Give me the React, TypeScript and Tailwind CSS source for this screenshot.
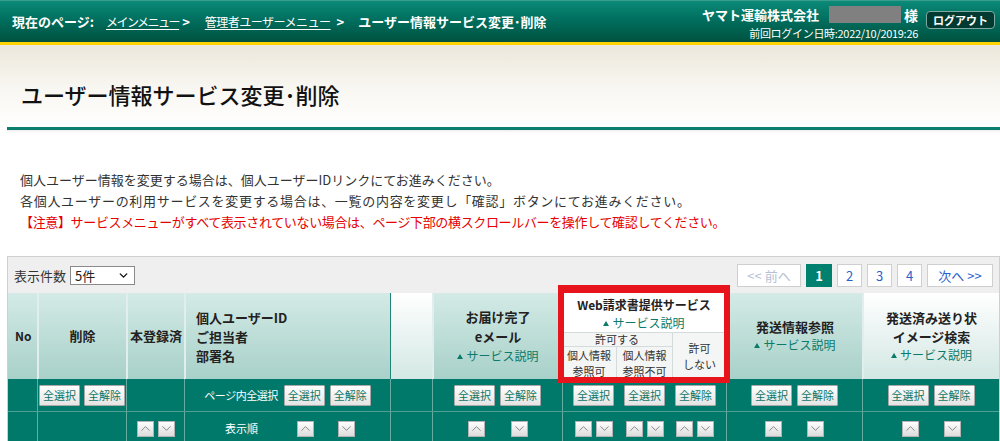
import React from "react";
import { ChevronUp, ChevronDown } from "lucide-react";

function Btn({ label }: { label: string }) {
  return (
    <div className="w-[41px] h-[21px] flex items-center justify-center border border-[#a9a9a9] bg-gradient-to-b from-white to-[#e4e4e4] text-[11px] leading-none text-[#0b7565] rounded-[1px]">
      {label}
    </div>
  );
}

function Arrow({ up }: { up?: boolean }) {
  return (
    <div className="w-[17px] h-[16px] flex items-center justify-center border border-[#b4b4b4] bg-gradient-to-b from-white to-[#dcdcdc]">
      {up ? (
        <ChevronUp size={15} strokeWidth={1.4} color="#7a7a7a" />
      ) : (
        <ChevronDown size={15} strokeWidth={1.4} color="#7a7a7a" />
      )}
    </div>
  );
}

function Pair() {
  return (
    <div className="flex gap-[4px]">
      <Arrow up />
      <Arrow />
    </div>
  );
}

function Svc() {
  return (
    <div className="flex items-center text-[12px] leading-[18px] text-[#0a7a69] font-normal">
      <svg width="6" height="5" viewBox="0 0 6 5" className="mr-[3px]">
        <polygon points="3,0 6,5 0,5" fill="#0a7a69" />
      </svg>
      サービス説明
    </div>
  );
}

const hdr =
  "bg-gradient-to-b from-[#d3eae6] to-[#a8d1c9] border-l-2 border-[#e2eeec]";
const body = "border-l border-[#66aca1]";

export default function App() {
  return (
    <div className="font-['Noto_Sans_CJK_JP','Noto_Sans',sans-serif] w-[1000px] h-[441px] overflow-hidden bg-white text-[#222]">
      {/* Top header */}
      <div className="h-[42px] bg-gradient-to-b from-[#0c8a78] via-[#006c5c] to-[#00523f] border-t border-[#3a9c8c] flex justify-between text-white">
        <div className="flex items-center pl-[12px] text-[13px] leading-none">
          <span className="font-bold">現在のページ:</span>
          <span className="ml-[12px] underline underline-offset-2 text-[12px] tracking-[-1.5px]">
            メインメニュー
          </span>
          <span className="ml-[3px] font-bold">&gt;</span>
          <span className="ml-[15px] underline underline-offset-2 text-[12px] tracking-[-0.5px]">
            管理者ユーザーメニュー
          </span>
          <span className="ml-[6px] font-bold">&gt;</span>
          <span className="ml-[14px] font-bold">ユーザー情報サービス変更･削除</span>
        </div>
        <div className="flex items-start pr-[5px] pt-[5px]">
          <div className="flex flex-col items-end">
            <div className="flex items-center h-[17px]">
              <span className="text-[13px] font-bold leading-none">ヤマト運輸株式会社</span>
              <span className="ml-[10px] w-[72px] h-[17px] bg-[#808080]" />
              <span className="ml-[3px] text-[14px] font-bold leading-none">様</span>
            </div>
            <div className="mt-[4px] text-[11px] leading-[12px] tracking-[-0.3px]">
              前回ログイン日時:2022/10/2019:26
            </div>
          </div>
          <div className="ml-[8px] mt-[5px] w-[69px] h-[18px] rounded-[4px] border border-[#7fa9a0] bg-[#013a31] text-[11px] font-bold leading-none flex items-center justify-center">
            ログアウト
          </div>
        </div>
      </div>
      <div className="h-[3px] bg-[#ffd200]" />

      {/* Title */}
      <div className="h-[82px] bg-gradient-to-b from-[#ebe7da] via-[#f8f6f0] to-white pt-[38px] pl-[21px]">
        <h1 className="text-[22px] leading-[22px] font-medium text-[#111]">
          ユーザー情報サービス変更･削除
        </h1>
      </div>
      <div className="ml-[7px] h-[3px] bg-[#0c7e6f]" />
      <div className="ml-[7px] h-[3px] bg-gradient-to-b from-[#ececec] to-white" />

      {/* Description */}
      <div className="pt-[36px] pl-[20px] text-[13px] leading-[21px] text-[#333]">
        <p>個人ユーザー情報を変更する場合は、個人ユーザーIDリンクにてお進みください。</p>
        <p className="tracking-[0.7px]">
          各個人ユーザーの利用サービスを変更する場合は、一覧の内容を変更し「確認」ボタンにてお進みください。
        </p>
        <p className="text-[#e60000] tracking-[-0.35px]">
          【注意】サービスメニューがすべて表示されていない場合は、ページ下部の横スクロールバーを操作して確認してください。
        </p>
      </div>

      {/* Panel */}
      <div className="ml-[7px] mt-[24px] w-[993px] border border-[#cfcfcf] bg-[#efefef]">
        <div className="h-[36px] flex items-center justify-between pl-[6px] pr-[6px]">
          <div className="flex items-center">
            <span className="text-[13px] leading-none text-[#333]">表示件数</span>
            <div className="ml-[4px] w-[65px] h-[19px] border border-[#8a8a8a] bg-white flex items-center justify-between pl-[4px] pr-[4px] text-[13px] leading-none">
              <span>5件</span>
              <ChevronDown size={13} strokeWidth={2.5} color="#111" />
            </div>
          </div>
          <div className="flex items-center gap-[5px] text-[13px] leading-none">
            <div className="w-[64px] h-[23px] border border-[#cfcfcf] bg-white flex items-center justify-center text-[#b6bfd6]">
              &lt;&lt; 前へ
            </div>
            <div className="w-[26px] h-[23px] border border-[#00806f] bg-[#00806f] flex items-center justify-center text-white font-bold">
              1
            </div>
            <div className="w-[25px] h-[23px] border border-[#cfcfcf] bg-white flex items-center justify-center text-[#2a5fcc]">
              2
            </div>
            <div className="w-[25px] h-[23px] border border-[#cfcfcf] bg-white flex items-center justify-center text-[#2a5fcc]">
              3
            </div>
            <div className="w-[25px] h-[23px] border border-[#cfcfcf] bg-white flex items-center justify-center text-[#2a5fcc]">
              4
            </div>
            <div className="w-[66px] h-[23px] border border-[#cfcfcf] bg-white flex items-center justify-center text-[#2a5fcc]">
              次へ &gt;&gt;
            </div>
          </div>
        </div>

        {/* Table header */}
        <div className="flex h-[86px] text-[#222]">
          <div className="w-[29px] bg-gradient-to-b from-[#d3eae6] to-[#a8d1c9] flex items-center pl-[7px] font-bold text-[12px]">
            No
          </div>
          <div className={`w-[89px] ${hdr} flex items-center justify-center font-bold text-[13px]`}>
            削除
          </div>
          <div className={`w-[58px] ${hdr} flex items-center justify-center font-bold text-[13px]`}>
            本登録済
          </div>
          <div className={`w-[206px] ${hdr} flex flex-col justify-center pl-[10px] font-bold text-[13px] leading-[19px]`}>
            <div>個人ユーザーID</div>
            <div>ご担当者</div>
            <div>部署名</div>
          </div>
          <div className="w-[42px] border-l border-[#1f8576] bg-gradient-to-b from-white to-[#d3e8e4]" />
          <div className={`w-[130px] ${hdr} flex flex-col items-center justify-center leading-[20px]`}>
            <div className="font-bold text-[13px]">お届け完了</div>
            <div className="font-bold text-[13px]">eメール</div>
            <Svc />
          </div>
          <div className="w-[164px] relative flex flex-col bg-white">
            <div className="h-[39px] flex flex-col items-center justify-center pt-[2px]">
              <div className="font-bold text-[12px] leading-[19px]">Web請求書提供サービス</div>
              <Svc />
            </div>
            <div className="h-[47px] flex border-t border-[#d3dcda] bg-[#f3f6f5] text-[11px] text-[#333]">
              <div className="w-[110px] flex flex-col">
                <div className="h-[16px] border-b border-[#d3dcda] flex items-center justify-center leading-none">
                  許可する
                </div>
                <div className="flex-1 flex">
                  <div className="w-[54px] flex flex-col items-center justify-center leading-[16px]">
                    <span>個人情報</span>
                    <span>参照可</span>
                  </div>
                  <div className="w-[56px] border-l border-[#d3dcda] flex flex-col items-center justify-center leading-[16px]">
                    <span>個人情報</span>
                    <span>参照不可</span>
                  </div>
                </div>
              </div>
              <div className="w-[54px] border-l border-[#d3dcda] flex flex-col items-center justify-center leading-[16px]">
                <span>許可</span>
                <span>しない</span>
              </div>
            </div>
            <div className="absolute -left-[4px] -right-[4px] -top-[8px] -bottom-[4px] border-[6px] border-t-[8px] border-[#e8141c] z-10 pointer-events-none" />
          </div>
          <div className={`w-[136px] ${hdr} flex flex-col items-center justify-center leading-[18px]`}>
            <div className="font-bold text-[13px]">発送情報参照</div>
            <Svc />
          </div>
          <div className="w-[137px] border-l-2 border-[#e2eeec] bg-gradient-to-b from-white to-[#d2e7e3] flex flex-col items-center justify-center leading-[19px]">
            <div className="font-bold text-[13px]">発送済み送り状</div>
            <div className="font-bold text-[13px]">イメージ検索</div>
            <Svc />
          </div>
        </div>

        {/* Body row 1 */}
        <div className="flex h-[33px] bg-[#00796b] border-b border-[#4f9f93]">
          <div className="w-[29px]" />
          <div className={`w-[89px] ${body} flex items-center justify-center gap-[4px]`}>
            <Btn label="全選択" />
            <Btn label="全解除" />
          </div>
          <div className={`w-[58px] ${body}`} />
          <div className={`w-[206px] ${body} flex items-center justify-center`}>
            <span className="text-white text-[11px] tracking-[-0.5px] mr-[6px]">ページ内全選択</span>
            <Btn label="全選択" />
            <div className="ml-[5px]">
              <Btn label="全解除" />
            </div>
          </div>
          <div className={`w-[42px] ${body}`} />
          <div className={`w-[130px] ${body} flex items-center justify-center gap-[5px]`}>
            <Btn label="全選択" />
            <Btn label="全解除" />
          </div>
          <div className={`w-[164px] ${body} flex items-center justify-evenly`}>
            <Btn label="全選択" />
            <Btn label="全選択" />
            <Btn label="全解除" />
          </div>
          <div className={`w-[136px] ${body} flex items-center justify-center gap-[5px]`}>
            <Btn label="全選択" />
            <Btn label="全解除" />
          </div>
          <div className={`w-[137px] ${body} flex items-center justify-center gap-[5px]`}>
            <Btn label="全選択" />
            <Btn label="全解除" />
          </div>
        </div>

        {/* Body row 2 */}
        <div className="flex h-[33px] bg-[#00796b]">
          <div className="w-[29px]" />
          <div className={`w-[89px] ${body}`} />
          <div className={`w-[58px] ${body} flex items-center justify-center`}>
            <Pair />
          </div>
          <div className={`w-[206px] ${body} flex items-center pl-[40px]`}>
            <span className="text-white text-[11px] w-[33px]">表示順</span>
            <div className="ml-[39px]">
              <Arrow up />
            </div>
            <div className="ml-[24px]">
              <Arrow />
            </div>
          </div>
          <div className={`w-[42px] ${body}`} />
          <div className={`w-[130px] ${body} flex items-center justify-center gap-[26px]`}>
            <Arrow up />
            <Arrow />
          </div>
          <div className={`w-[164px] ${body} flex items-center justify-evenly`}>
            <Pair />
            <Pair />
            <Pair />
          </div>
          <div className={`w-[136px] ${body} flex items-center justify-center gap-[25px]`}>
            <Arrow up />
            <Arrow />
          </div>
          <div className={`w-[137px] ${body} flex items-center justify-center gap-[25px]`}>
            <Arrow up />
            <Arrow />
          </div>
        </div>
      </div>
    </div>
  );
}
